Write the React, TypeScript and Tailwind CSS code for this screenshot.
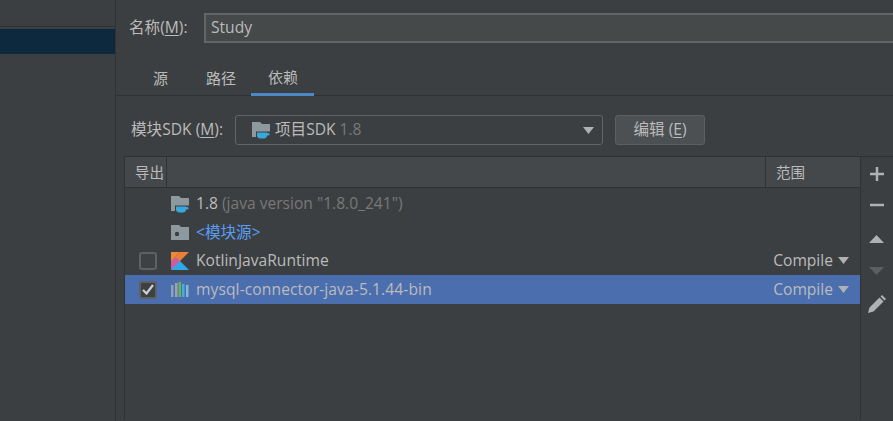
const font = { fontFamily: '"Open Sans", "Noto Sans CJK SC", sans-serif' };

function FolderShape({ children }: { children?: React.ReactNode }) {
  return (
    <svg width="18" height="17" viewBox="0 0 18 17" className="shrink-0">
      <path d="M0 0h8l2 2h8v13H0z" fill="#8e999f" />
      {children}
    </svg>
  );
}

function SdkIcon() {
  return (
    <FolderShape>
      <path d="M4 9.500h14V17H4z" fill="#3c3f41" />
      <path d="M5 10.500h10v3c0 2-1.500 3-3 3H8.500c-2 0-3.500-1-3.500-3z" fill="#3aa7dc" />
      <path d="M15 11h1.500c1.500 0 1.500 2.500 0 2.500H15z" fill="#3aa7dc" />
    </FolderShape>
  );
}

function KotlinIcon() {
  return (
    <svg width="18" height="18" viewBox="0 0 18 18" className="shrink-0">
      <path d="M0 0h9L0 9.500z" fill="#f08a32" />
      <path d="M9 0h9L9 9 4.500 13 0 18V9.500z" fill="#ee7f3a" />
      <path d="M0 18V9.500L5 5l4.500 4.500z" fill="#c95fa0" />
      <path d="M0 18l9-9 9 9z" fill="#2fa9e8" />
    </svg>
  );
}

function LibIcon() {
  return (
    <svg width="18" height="15" viewBox="0 0 18 15" className="shrink-0">
      <rect x="0" y="3" width="2.500" height="12" fill="#8fa3b5" />
      <rect x="4" y="1" width="2.500" height="14" fill="#9aa7b1" />
      <rect x="7.500" y="0" width="2.500" height="15" fill="#72b34e" />
      <rect x="11" y="2" width="2.500" height="13" fill="#3fb0e0" />
      <rect x="15" y="3" width="2.500" height="12" fill="#8fb3d0" />
    </svg>
  );
}

function Caret() {
  return (
    <svg width="11" height="7" viewBox="0 0 11 7">
      <path d="M0 0h11L5.500 7z" fill="#afb1b3" />
    </svg>
  );
}

function Check({ checked }: { checked?: boolean }) {
  return (
    <div className="w-[18px] h-[18px] rounded-[3px] border-2 border-[#5e6163] bg-[#3e4143] flex items-center justify-center">
      {checked && (
        <svg width="12" height="11" viewBox="0 0 12 11">
          <path d="M1 6l3.500 3.500L11 1" fill="none" stroke="#d0d0d0" strokeWidth="2.200" />
        </svg>
      )}
    </div>
  );
}

function U({ children }: { children: React.ReactNode }) {
  return <span className="underline underline-offset-2">{children}</span>;
}

function Row({ selected, check, icon, children, scope }: { selected?: boolean; check?: 'on' | 'off'; icon: React.ReactNode; children: React.ReactNode; scope?: boolean }) {
  return (
    <div className={`h-[29px] flex items-center ${selected ? 'bg-[#4b6eaf]' : ''} ${scope ? '' : 'pt-[3px]'}`}>
      <div className="w-[46px] pl-[14px] shrink-0">{check && <Check checked={check === 'on'} />}</div>
      <div className="w-[25px] shrink-0 flex items-center">{icon}</div>
      <div className="flex-1 truncate">{children}</div>
      {scope && (
        <div className="flex items-center gap-[4px] pr-[11px]">
          <span className="mr-[1px]">Compile</span> <Caret />
        </div>
      )}
    </div>
  );
}

export default function App() {
  return (
    <div className="w-[893px] h-[421px] overflow-hidden flex bg-[#3c3f41] text-[#bbbbbb] text-[15.6px]" style={font}>
      {/* 左侧列表 */}
      <div className="w-[116px] shrink-0 border-r border-[#323232] pt-[26px]">
        <div className="h-[3px] border-t border-[#323232]" />
        <div className="h-[25px] bg-[#0d293e]" />
      </div>

      <div className="flex-1 min-w-0">
        {/* 名称 */}
        <div className="flex items-center pt-[13px] pl-[13px]">
          <span className="w-[75px]">名称(<U>M</U>):</span>
          <div className="flex-1 h-[30px] bg-[#45494a] border-y-2 border-l-2 border-[#646464] flex items-center pl-[5px]">Study</div>
        </div>

        {/* 标签 */}
        <div className="flex h-[37px] mt-[16px] border-b border-[#323232] pl-[21px] text-[15px]">
          <div className="w-[52px] pl-[16px] pt-[2px] flex items-center">源</div>
          <div className="w-[62px] pl-[17px] pt-[2px] flex items-center">路径</div>
          <div className="w-[63px] pl-[17px] pt-[2px] flex items-center border-b-[3px] border-[#4a88c7] h-[37px]">依赖</div>
        </div>

        {/* 模块SDK */}
        <div className="flex items-center pt-[19px] pl-[15px]">
          <span className="w-[104px]">模块SDK (<U>M</U>):</span>
          <div className="w-[368px] h-[30px] rounded-[3px] border border-[#646464] flex items-center pl-[16px] pr-[8px]">
            <SdkIcon />
            <span className="ml-[5px]">项目SDK</span>
            <span className="ml-[4px] text-[#787878]">1.8</span>
            <span className="ml-auto"><Caret /></span>
          </div>
          <div className="ml-[12px] w-[90px] h-[30px] rounded-[3px] border border-[#5e6060] bg-[#4c5052] flex items-center justify-center">编辑 (<U>E</U>)</div>
        </div>

        {/* 依赖表 */}
        <div className="flex ml-[8px] mt-[11px] h-[264px] border-t border-[#323232]">
          <div className="w-[737px] border-x border-[#323232]">
            <div className="h-[31px] flex bg-[#45484a] border-b border-[#323232] text-[14.5px]">
              <div className="w-[42px] pl-[10px] pt-[2px] border-r border-[#323232] flex items-center">导出</div>
              <div className="flex-1" />
              <div className="w-[95px] pl-[10px] pt-[2px] border-l border-[#323232] flex items-center">范围</div>
            </div>
            <Row icon={<SdkIcon />}>1.8 <span className="text-[#787878]">(java version "1.8.0_241")</span></Row>
            <Row icon={<FolderShape><circle cx="6" cy="9" r="2.200" fill="#3c3f41" /></FolderShape>}><span className="text-[#589df6]">&lt;模块源&gt;</span></Row>
            <Row check="off" icon={<KotlinIcon />} scope>KotlinJavaRuntime</Row>
            <Row selected check="on" icon={<LibIcon />} scope><span className="tracking-[0.1px]">mysql-connector-java-5.1.44-bin</span></Row>
          </div>

          {/* 工具条 */}
          <div className="flex-1 flex flex-col items-center pt-[10px] pr-[1px]">
            <svg width="14" height="14" viewBox="0 0 14 14"><path d="M0 7h14M7 0v14" stroke="#afb1b3" strokeWidth="2.500" /></svg>
            <svg width="14" height="14" viewBox="0 0 14 14" className="mt-[17px]"><path d="M0 7h14" stroke="#afb1b3" strokeWidth="2.500" /></svg>
            <svg width="15" height="8" viewBox="0 0 15 8" className="mt-[23px]"><path d="M0 8h15L7.500 0z" fill="#afb1b3" /></svg>
            <svg width="15" height="8" viewBox="0 0 15 8" className="mt-[24px]"><path d="M0 0h15L7.500 8z" fill="#5c5f61" /></svg>
            <svg width="18" height="18" viewBox="0 0 18 18" className="mt-[20px]"><path d="M0 18l1.500-5.500L11.500 2.500l4 4L5.500 16.500zM12.500 1.500L14 0l4 4-1.500 1.500z" fill="#afb1b3" /></svg>
          </div>
        </div>
      </div>
    </div>
  );
}
